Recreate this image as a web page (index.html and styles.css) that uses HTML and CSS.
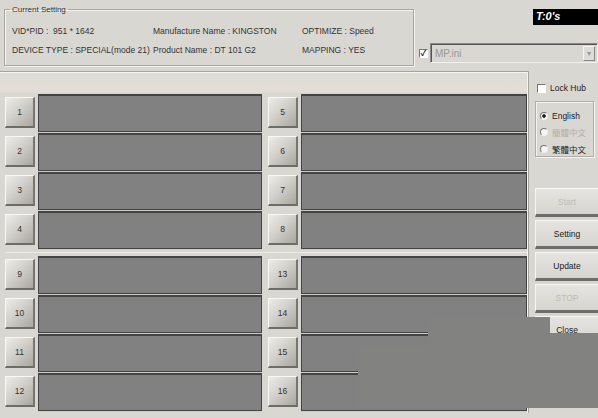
FILE: index.html
```html
<!DOCTYPE html>
<html lang="en">
<head>
	<meta charset="utf-8">
	<title>MP Tool</title>
	<link rel="stylesheet" href="styles.css">
</head>
<body>
	<div id="win">
		<div class="top">
			<fieldset class="setting">
				<legend>Current Setting</legend>
				<div class="info">
					<span>VID*PID :&nbsp; 951 * 1642</span>
					<span>Manufacture Name : KINGSTON</span>
					<span>OPTIMIZE : Speed</span>
					<span>DEVICE TYPE : SPECIAL(mode 21)</span>
					<span>Product Name : DT 101 G2</span>
					<span>MAPPING : YES</span>
				</div>
			</fieldset>
			<div class="topright">
				<div class="timer">T:0's</div>
				<div class="ini">
					<span class="chk on">&#10003;</span>
					<div class="combo">
						<span>MP.ini</span>
						<span class="arrow">&#9662;</span>
					</div>
				</div>
			</div>
		</div>
		<div class="main">
			<div class="panel">
				<div class="ports">
					<div class="port"><span class="num">1</span><span class="bar"></span></div>
					<div class="port"><span class="num">5</span><span class="bar"></span></div>
					<div class="port"><span class="num">2</span><span class="bar"></span></div>
					<div class="port"><span class="num">6</span><span class="bar"></span></div>
					<div class="port"><span class="num">3</span><span class="bar"></span></div>
					<div class="port"><span class="num">7</span><span class="bar"></span></div>
					<div class="port"><span class="num">4</span><span class="bar"></span></div>
					<div class="port"><span class="num">8</span><span class="bar"></span></div>
				</div>
				<div class="ports second">
					<div class="port"><span class="num">9</span><span class="bar"></span></div>
					<div class="port"><span class="num">13</span><span class="bar"></span></div>
					<div class="port"><span class="num">10</span><span class="bar"></span></div>
					<div class="port"><span class="num">14</span><span class="bar"></span></div>
					<div class="port"><span class="num">11</span><span class="bar"></span></div>
					<div class="port"><span class="num">15</span><span class="bar"></span></div>
					<div class="port"><span class="num">12</span><span class="bar"></span></div>
					<div class="port"><span class="num">16</span><span class="bar"></span></div>
				</div>
			</div>
			<div class="side">
				<div class="lock"><span class="chk"></span>Lock Hub</div>
				<div class="lang">
					<div class="radio"><span class="dot on"></span>English</div>
					<div class="radio off"><span class="dot"></span>簡體中文</div>
					<div class="radio"><span class="dot"></span>繁體中文</div>
				</div>
				<div class="btns">
					<div class="btn dis">Start</div>
					<div class="btn">Setting</div>
					<div class="btn">Update</div>
					<div class="btn dis">STOP</div>
					<div class="btn">Close</div>
				</div>
			</div>
		</div>
		<!-- grey patch covering the lower right corner -->
		<div class="patch p1"></div>
		<div class="patch p2"></div>
		<div class="patch p3"></div>
	</div>
</body>
</html>
```

FILE: styles.css
```css
*{
	margin: 0;
	padding: 0;
	box-sizing: border-box;
}
body{
	background: #d9d7d2;
	font-family: "Liberation Sans", Arial, "Noto Sans CJK TC", sans-serif;
	font-size: 8.5px;
	color: #222;
}
#win{
	position: relative;
	width: 598px;
	height: 418px;
	overflow: hidden;
}
/*top area*/
.top{
	display: flex;
	height: 71px;
}
.setting{
	width: 410px;
	height: 61px;
	margin: 5px 0 0 4px;
	border: 1px solid #a8a6a0;
	box-shadow: inset 1px 1px #f4f3f0, 1px 1px #f4f3f0;
	padding: 0 0 0 7px;
}
.setting legend{
	font-size: 8px;
	padding: 0 2px;
	margin-left: -2px;
	color: #333;
}
.info{
	display: grid;
	grid-template-columns: 141px 149px auto;
	row-gap: 9px;
	padding-top: 12px;
	color: #333;
}
.topright{
	flex: 1;
	display: flex;
	flex-direction: column;
	align-items: flex-end;
}
.timer{
	width: 65px;
	height: 16px;
	margin-top: 9px;
	background: #000;
	color: #fff;
	font: italic bold 11px "Liberation Sans", Arial, sans-serif;
	padding: 1px 0 0 3px;
}
.ini{
	display: flex;
	align-items: center;
	width: 179px;
	margin-top: 18px;
	gap: 2px;
}
.chk{
	width: 9px;
	height: 9px;
	border: 1px solid #777;
	border-right-color: #fff;
	border-bottom-color: #fff;
	background: #fff;
	font-size: 8px;
	line-height: 7px;
	text-align: center;
	font-weight: bold;
	color: #222;
}
.combo{
	flex: 1;
	height: 20px;
	display: flex;
	justify-content: space-between;
	align-items: center;
	border: 1px solid #8a8884;
	border-right-color: #f2f1ee;
	border-bottom-color: #f2f1ee;
	box-shadow: inset 1px 1px #555;
	padding: 0 2px 0 4px;
	color: #9a9894;
	font-size: 10px;
}
.arrow{
	width: 12px;
	height: 15px;
	background: #dedcd7;
	border: 1px solid #f6f6f4;
	border-right-color: #888;
	border-bottom-color: #888;
	font-size: 8px;
	line-height: 13px;
	text-align: center;
	color: #999;
}
/*port panel*/
.main{
	display: flex;
	height: 347px;
}
.panel{
	width: 529px;
	height: 342px;
	border-top: 1px solid #a6a49f;
	border-right: 1px solid #a6a49f;
	box-shadow: inset 0 1px #f6f5f2, inset -1px 0 #f6f5f2;
	background: linear-gradient(#dedcd6 0, #e2ded6 20px, #d9d7d2 21px);
	padding: 21px 0 0 5px;
}
.ports{
	display: grid;
	grid-template-columns: 263px 259px;
	grid-auto-rows: 39px;
	width: 522px;
}
.second{
	margin-top: 3px;
	padding-top: 2px;
	border-top: 1px solid #ecebe7;
}
.port{
	display: flex;
	align-items: center;
	gap: 3px;
}
.port:nth-child(odd){
	padding-right: 6px;
}
.num{
	width: 30px;
	height: 31px;
	display: flex;
	align-items: center;
	justify-content: center;
	background: linear-gradient(135deg, #eeece8 0, #d2d0ca 45%, #a9a6a0 100%);
	border-top: 1px solid #f8f8f6;
	border-left: 1px solid #f8f8f6;
	border-right: 2px solid #77756f;
	border-bottom: 2px solid #6e6c67;
	color: #333;
	font-size: 8.5px;
}
.bar{
	flex: 1;
	height: 38px;
	background: #818181;
	border: 1px solid #444;
	border-top-width: 2px;
	box-shadow: 0 1px #cfcdc8;
}
/*right side*/
.side{
	flex: 1;
	padding: 12px 4px 0 6px;
}
.lock{
	display: flex;
	align-items: center;
	gap: 4px;
	padding-left: 2px;
	font-size: 8.5px;
}
.lang{
	margin-top: 8px;
	height: 56px;
	border: 1px solid #b0aea8;
	box-shadow: inset 1px 1px #f4f3f0, 1px 1px #f4f3f0;
	padding: 9px 0 0 4px;
	display: flex;
	flex-direction: column;
	gap: 5px;
}
.radio{
	display: flex;
	align-items: center;
	gap: 4px;
	font-size: 8.5px;
}
.radio.off{
	color: #b0aea8;
}
.dot{
	width: 8px;
	height: 8px;
	border-radius: 50%;
	border: 1px solid #777;
	border-right-color: #eee;
	border-bottom-color: #eee;
	background: #f6f6f4;
}
.dot.on{
	background: radial-gradient(#222 0 1.5px, #f6f6f4 2px);
}
.btns{
	margin: 31px -4px 0 0;
	display: flex;
	flex-direction: column;
	gap: 3px;
}
.btn{
	height: 29px;
	display: flex;
	align-items: center;
	justify-content: center;
	background: linear-gradient(#e6e4e0, #d6d4ce);
	border-top: 1px solid #f7f6f3;
	border-left: 1px solid #f7f6f3;
	border-bottom: 3px solid #6f6d68;
	font-size: 8.5px;
	color: #222;
}
.btn.dis{
	color: #bdbbb5;
}
.patch{
	position: absolute;
	background: #828281;
}
.p1{
	left: 428px;
	top: 317px;
	width: 122px;
	height: 17px;
}
.p2{
	left: 428px;
	top: 333px;
	width: 170px;
	height: 75px;
}
.p3{
	left: 358px;
	top: 346px;
	width: 72px;
	height: 62px;
}
```
